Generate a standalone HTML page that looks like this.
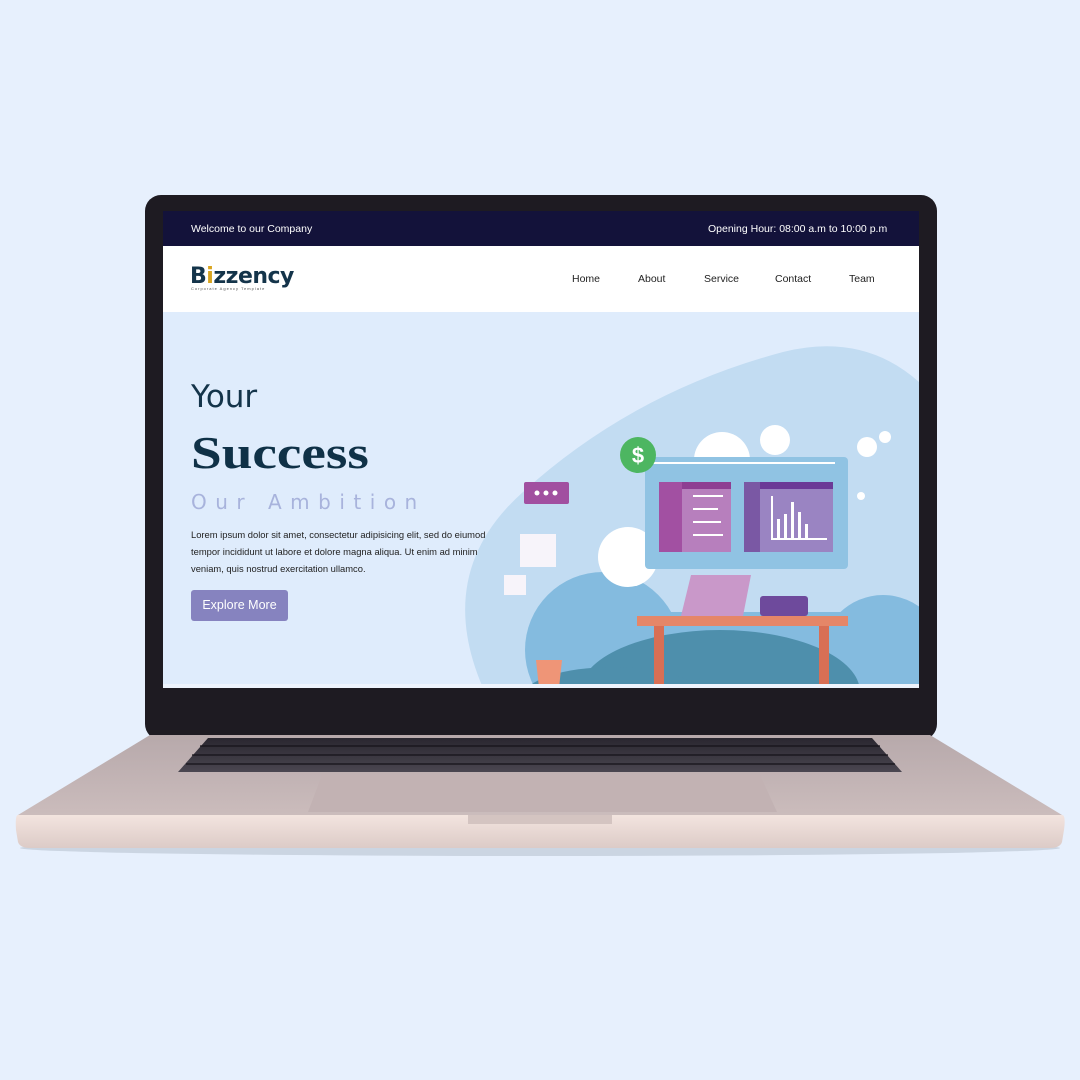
<!DOCTYPE html>
<html><head><meta charset="utf-8"><style>
*{margin:0;padding:0;box-sizing:border-box}
body{width:1080px;height:1080px;background:#e7f0fd;position:relative;overflow:hidden;font-family:"Liberation Sans",sans-serif}
.abs{position:absolute}
.screen{left:163px;top:211px;width:756px;height:477px;background:#dfecfc;overflow:hidden}
.top{left:0;top:0;width:756px;height:35px;background:#13123a;color:#fff;font-size:10.5px}
.nav{left:0;top:35px;width:756px;height:66px;background:#fff}
.nav .l{position:absolute;top:27px;font-size:10.5px;color:#222}
</style></head><body>
<svg class="abs" style="left:0;top:0" width="1080" height="1080">
<defs>
<linearGradient id="deck" x1="0" y1="0" x2="0" y2="1"><stop offset="0" stop-color="#b7a9ab"/><stop offset="1" stop-color="#cbbcbc"/></linearGradient>
<linearGradient id="front" x1="0" y1="0" x2="0" y2="1"><stop offset="0" stop-color="#f3e4df"/><stop offset="1" stop-color="#dccbc7"/></linearGradient>
<linearGradient id="kb" x1="0" y1="0" x2="0" y2="1"><stop offset="0" stop-color="#2a2730"/><stop offset="1" stop-color="#4a4650"/></linearGradient>
</defs>
<ellipse cx="540" cy="848" rx="520" ry="8" fill="#b9c3d0" opacity=".6"/>
<rect x="145" y="195" width="792" height="545" rx="16" fill="#1e1b22"/>
<path d="M150 735 L930 735 L1062 815 L18 815 Z" fill="url(#deck)"/>
<path d="M18 815 L1062 815 Q1066 815 1064 830 L1062 842 Q1060 848 1050 848 L30 848 Q20 848 18 842 L16 830 Q15 815 18 815Z" fill="url(#front)"/>
<path d="M208 738 L872 738 L902 772 L178 772 Z" fill="url(#kb)"/>
<g stroke="#151319" stroke-width="1.2">
<line x1="200" y1="746" x2="880" y2="746"/><line x1="192" y1="755" x2="888" y2="755"/><line x1="186" y1="764" x2="895" y2="764"/>
</g>
<path d="M322 775 L760 775 L777 812 L308 812 Z" fill="#c2b2b3"/>
<path d="M468 815 L612 815 L612 824 L468 824 Z" fill="#d4c4c1"/>
</svg>
<div class="abs screen">
 <div class="abs top"><span class="abs" style="left:28px;top:12px">Welcome to our Company</span><span class="abs" style="left:545px;top:12px">Opening Hour: 08:00 a.m to 10:00 p.m</span></div>
 <div class="abs nav">
  <div class="abs" style="left:27px;top:18px;font:bold 22px 'DejaVu Sans',sans-serif;color:#14344a;letter-spacing:-0.5px;white-space:nowrap">B<b style="color:#d9a520">i</b>zzency</div>
  <div class="abs" style="left:28px;top:40px;font-size:4px;color:#555;letter-spacing:1px;white-space:nowrap">Corporate Agency Template</div>
  <div class="l" style="left:409px">Home</div><div class="l" style="left:475px">About</div><div class="l" style="left:541px">Service</div><div class="l" style="left:612px">Contact</div><div class="l" style="left:686px">Team</div>
 </div>
 <svg class="abs" style="left:0;top:101px" width="756" height="376">
  <path d="M756 70 Q700 20 620 40 Q470 80 360 180 Q270 260 320 376 L756 376Z" fill="#c2dcf2"/>
  <circle cx="559" cy="148" r="28" fill="#fff"/>
  <circle cx="612" cy="128" r="15" fill="#fff"/>
  <circle cx="440" cy="338" r="78" fill="#84bbdf"/>
  <circle cx="720" cy="345" r="62" fill="#84bbdf"/>
  <rect x="440" y="300" width="290" height="76" fill="#84bbdf"/>
  <circle cx="465" cy="245" r="30" fill="#fff"/>
  <ellipse cx="557" cy="380" rx="140" ry="62" fill="#4e8fac"/>
  <ellipse cx="450" cy="385" rx="90" ry="30" fill="#4e8fac"/>
  <rect x="482" y="145" width="203" height="112" rx="4" fill="#90c3e3"/>
  <rect x="482" y="150" width="190" height="2" fill="#fff"/>
  <rect x="496" y="170" width="72" height="70" fill="#b77fbd"/><rect x="496" y="170" width="72" height="7" fill="#8e3e92"/><rect x="496" y="170" width="23" height="70" fill="#a250a2"/>
  <rect x="581" y="170" width="89" height="70" fill="#9a84c2"/><rect x="581" y="170" width="89" height="7" fill="#6b3a97"/><rect x="581" y="170" width="16" height="70" fill="#7a58a4"/>
  <g fill="#fff"><rect x="530" y="183" width="30" height="2"/><rect x="530" y="196" width="25" height="2"/><rect x="530" y="209" width="28" height="2"/><rect x="530" y="222" width="30" height="2"/>
  <rect x="608" y="184" width="2" height="44"/><rect x="608" y="226" width="56" height="2"/>
  <rect x="614" y="207" width="3" height="19"/><rect x="621" y="202" width="3" height="24"/><rect x="628" y="190" width="3" height="36"/><rect x="635" y="200" width="3" height="26"/><rect x="642" y="212" width="3" height="14"/></g>
  <circle cx="475" cy="143" r="18" fill="#4db661"/><text x="475" y="151" font-size="22" font-weight="bold" text-anchor="middle" fill="#fff" font-family="Liberation Sans">$</text>
  <rect x="361" y="170" width="45" height="22" rx="2" fill="#a14fa0"/>
  <g fill="#fff"><circle cx="374" cy="181" r="2.5"/><circle cx="383" cy="181" r="2.5"/><circle cx="392" cy="181" r="2.5"/></g>
  <rect x="357" y="222" width="36" height="33" fill="#f7f4fa"/><rect x="341" y="263" width="22" height="20" fill="#f7f4fa"/>
  <path d="M528 263 L588 263 L580 304 L518 304Z" fill="#c998c9"/>
  <rect x="597" y="284" width="48" height="20" rx="3" fill="#6e4a9c"/>
  <rect x="474" y="304" width="211" height="10" fill="#e58668"/>
  <rect x="491" y="314" width="10" height="62" fill="#d86f55"/><rect x="656" y="314" width="10" height="62" fill="#d86f55"/>
  <path d="M373 348 L399 348 L396 376 L376 376Z" fill="#ef9577"/>
  <circle cx="704" cy="135" r="10" fill="#fff"/><circle cx="722" cy="125" r="6" fill="#fff"/>
  <circle cx="698" cy="184" r="4" fill="#fff"/>
 </svg>
 <div class="abs" style="left:28px;top:168px;font:31px 'DejaVu Sans',sans-serif;color:#14344a">Your</div>
 <div class="abs" style="left:28px;top:215px;font:bold 46px 'Liberation Serif',serif;color:#0f3147;transform:scaleX(1.2);transform-origin:left;white-space:nowrap">Success</div>
 <div class="abs" style="left:28px;top:279px;font:20px 'DejaVu Sans',sans-serif;color:#a8b3dc;letter-spacing:8.5px;white-space:nowrap">Our Ambition</div>
 <div class="abs" style="left:28px;top:315px;font-size:9.4px;line-height:17px;color:#222;white-space:nowrap">Lorem ipsum dolor sit amet, consectetur adipisicing elit, sed do eiumod<br>tempor incididunt ut labore et dolore magna aliqua. Ut enim ad minim<br>veniam, quis nostrud exercitation ullamco.</div>
 <div class="abs" style="left:28px;top:379px;width:97px;height:31px;background:#8683bf;border-radius:3px;color:#fff;font-size:12.5px;line-height:31px;text-align:center">Explore More</div>
 <div class="abs" style="left:0;top:473px;width:756px;height:4px;background:#eef4fd"></div>
</div>
</body></html>
